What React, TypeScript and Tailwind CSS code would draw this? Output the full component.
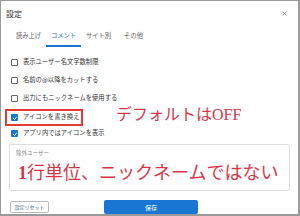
import { X } from 'lucide-react';

const tabs = ['読み上げ', 'コメント', 'サイト別', 'その他'];

function Box({ checked }: { checked: boolean }) {
  if (checked) {
    return (
      <span className="flex h-[7px] w-[7px] items-center justify-center rounded-[1px] bg-[#1976d2]">
        <svg viewBox="0 0 10 10" className="h-[6px] w-[6px]">
          <path d="M2 5.2 L4.2 7.4 L8.2 2.8" fill="none" stroke="white" strokeWidth="1.6" />
        </svg>
      </span>
    );
  }
  return <span className="h-[7px] w-[7px] rounded-[1px] border border-[#666]" />;
}

function Row({ label, checked, className }: { label: string; checked: boolean; className: string }) {
  return (
    <div className={'flex items-center gap-[5px] ' + className}>
      <Box checked={checked} />
      <span className="text-[6.3px] leading-none text-[#333]">{label}</span>
    </div>
  );
}

export default function App() {
  return (
    <div
      className="relative flex h-[216px] w-[300px] flex-col overflow-hidden border-t border-l border-r-2 border-b-2 border-[#9a9a9a] bg-white"
      style={{ fontFamily: '"Noto Sans CJK JP", "Noto Sans", sans-serif' }}
    >
      {/* header */}
      <div className="flex h-[25px] shrink-0 items-center justify-between pl-[5px] pr-[10px]">
        <span className="text-[8px] text-[#333]">設定</span>
        <X className="h-[7px] w-[7px] text-[#777]" strokeWidth={2.5} />
      </div>

      {/* tabs */}
      <div className="flex h-[21px] shrink-0 items-stretch pl-[10px]">
        {tabs.map((t, i) => (
          <div
            key={t}
            className={
              'flex w-[35px] items-center justify-center border-b-2 text-[6.3px] ' +
              (i === 1 ? 'border-[#1976d2] text-[#1976d2]' : 'border-transparent text-[#666]')
            }
          >
            {t}
          </div>
        ))}
      </div>

      {/* options */}
      <div className="mt-[7px] flex flex-col">
        <div className="pl-[10px]">
          <Row label="表示ユーザー名文字数制限" checked={false} className="h-[17px]" />
          <Row label="名前の@以降をカットする" checked={false} className="h-[18px]" />
          <Row label="出力にもニックネームを使用する" checked={false} className="h-[18px]" />
        </div>
        <div className="ml-[4px] mt-[2px] flex h-[17px] w-[78px] items-center border-2 border-[#e53935] pl-[4px]">
          <Row label="アイコンを書き換え" checked={true} className="h-full" />
        </div>
        <div className="pl-[10px]">
          <Row label="アプリ内ではアイコンを表示" checked={true} className="h-[15px]" />
        </div>
      </div>

      {/* exclude users */}
      <div className="mx-[8px] mt-[3px] h-[48px] rounded-[2px] border border-[#ddd] px-[6px] pt-[6px]">
        <div className="text-[5.5px] leading-none text-[#888]">除外ユーザー</div>
      </div>

      {/* footer */}
      <div className="mt-[9px] flex items-center pl-[9px]">
        <div className="flex h-[12px] w-[39px] items-center justify-center rounded-[2px] border border-[#bbb] text-[5px] text-[#3b5b8a]">
          設定リセット
        </div>
        <div className="ml-[55px] flex h-[14px] w-[94px] items-center justify-center rounded-[2px] bg-[#1976d2] text-[6px] text-white">
          保存
        </div>
      </div>

      {/* red annotations */}
      <div
        className="absolute left-[115px] top-[106px] text-[16px] leading-none text-[#d9364a]"
        style={{ fontFamily: '"Liberation Serif", "Noto Sans CJK JP", serif' }}
      >
        デフォルトはOFF
      </div>
      <div
        className="absolute left-[17px] top-[163px] text-[18px] leading-none text-[#d9364a]"
        style={{ fontFamily: '"Liberation Serif", "Noto Sans CJK JP", serif' }}
      >
        <span className="font-bold">1</span>行単位、ニックネームではない
      </div>
    </div>
  );
}
